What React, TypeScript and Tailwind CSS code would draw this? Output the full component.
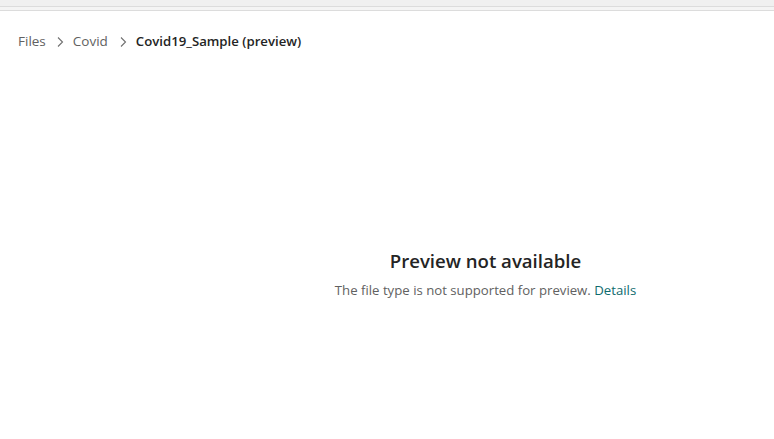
export default function App() {
  return (
    <div className="w-[774px] h-[439px] bg-white overflow-hidden" style={{ fontFamily: '"Open Sans", "Noto Sans", sans-serif' }}>
      <div className="h-[6px] bg-[#f0f0f0]" />
      <div className="h-[5px] bg-[#f4f4f4] border-t border-b border-[#dcdcdc]" />
      <nav className="flex items-center pl-[18px] pt-[21px] h-[40px] text-[13.5px] text-[#616161]">
        <span>Files</span>
        <svg className="ml-[9px] mr-[8px]" width="10" height="14" viewBox="0 0 10 14" fill="none" stroke="#707070" strokeWidth="1.1">
          <path d="M3 2.5 L7.5 7 L3 11.5" />
        </svg>
        <span>Covid</span>
        <svg className="ml-[10px] mr-[8px]" width="10" height="14" viewBox="0 0 10 14" fill="none" stroke="#707070" strokeWidth="1.1">
          <path d="M3 2.5 L7.5 7 L3 11.5" />
        </svg>
        <span className="font-semibold text-[#242424] text-[13.2px]">Covid19_Sample (preview)</span>
      </nav>
      <div className="flex flex-col items-center pl-[197px] pt-[197px]">
        <h1 className="text-[18.6px] font-semibold text-[#242424] leading-[26px]">Preview not available</h1>
        <p className="mt-[7px] text-[13.2px] text-[#616161]">
          The file type is not supported for preview. <span className="text-[#0e6b6e]">Details</span>
        </p>
      </div>
    </div>
  );
}
